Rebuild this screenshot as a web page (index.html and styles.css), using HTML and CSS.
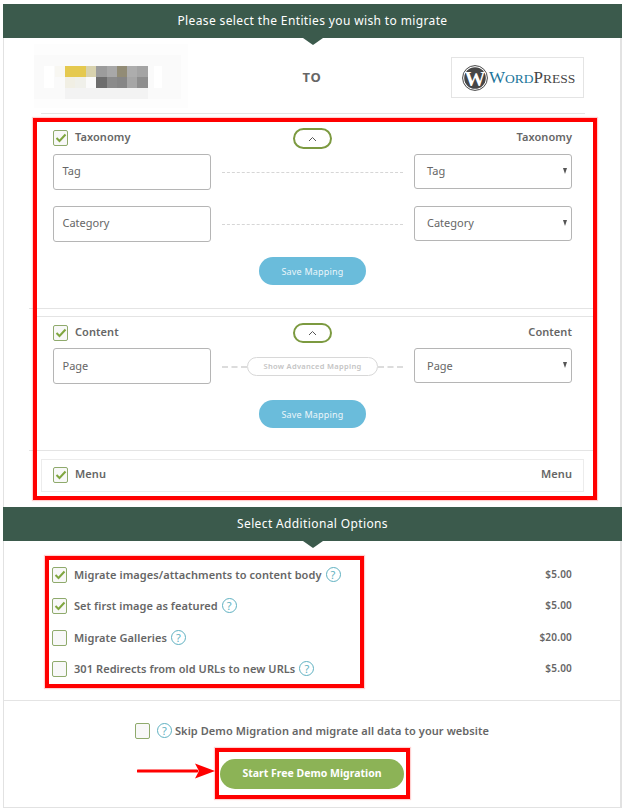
FILE: index.html
```html
<!DOCTYPE html>
<html lang="en">
<head>
<meta charset="utf-8">
<title>Migration</title>
<link rel="stylesheet" href="styles.css">
</head>
<body>
<main class="page">
  <h2 class="band">Please select the Entities you wish to migrate</h2>
  <div class="logos">
    <svg class="src-logo" width="154" height="64" viewBox="0 0 154 64" aria-hidden="true">
      <defs><filter id="b" x="-10%" y="-10%" width="120%" height="120%"><feGaussianBlur stdDeviation="0.7"/></filter></defs>
      <rect width="154" height="64" fill="#fdfdfd"/>
      <rect y="11" width="147" height="44" fill="#fafafa"/>
      <g filter="url(#b)">
        <rect x="10" y="22" width="10" height="22" fill="#fff"/>
        <rect x="21" y="22" width="10" height="11" fill="#f8f7f2"/>
        <rect x="31" y="22" width="21" height="11" fill="#e5c94f"/>
        <rect x="52" y="22" width="10" height="11" fill="#d8d2ae"/>
        <rect x="62" y="22" width="11" height="11" fill="#9c9c9c"/>
        <rect x="73" y="22" width="10" height="11" fill="#a8a8a8"/>
        <rect x="83" y="22" width="10" height="11" fill="#928c76"/>
        <rect x="93" y="22" width="10" height="11" fill="#adadad"/>
        <rect x="103" y="22" width="11" height="11" fill="#a4a4a4"/>
        <rect x="31" y="33" width="10" height="11" fill="#f1efe4"/>
        <rect x="41" y="33" width="11" height="11" fill="#f0f0ea"/>
        <rect x="62" y="33" width="11" height="11" fill="#6d6d6d"/>
        <rect x="73" y="33" width="10" height="11" fill="#8b8b8b"/>
        <rect x="83" y="33" width="10" height="11" fill="#868686"/>
        <rect x="93" y="33" width="10" height="11" fill="#a6a6a6"/>
        <rect x="103" y="33" width="11" height="11" fill="#8e8e8e"/>
        <rect x="31" y="44" width="83" height="11" fill="#f3f3f3"/>
        <rect x="120" y="22" width="8" height="22" fill="#fff"/>
      </g>
    </svg>
    <span class="to">TO</span>
    <div class="wp-box">
      <svg class="wp-mark" width="26" height="26" viewBox="0 0 26 26" aria-hidden="true">
        <circle cx="13" cy="13" r="12.4" fill="#fff" stroke="#464646" stroke-width="1"/>
        <circle cx="13" cy="13" r="10.8" fill="#464646"/>
        <text class="wp-w" x="13" y="20.5" text-anchor="middle">W</text>
      </svg>
      <span class="wp-word"><span class="wp-blue"><b>W</b><i>ORD</i></span><b>P</b><i>RESS</i></span>
    </div>
  </div>
  <hr class="rule rule-logos">

  <div class="red red-map">
    <section class="entity entity-tax">
      <div class="head">
        <label class="check-label"><span class="box on"><svg viewBox="0 0 12 10" width="12" height="10"><path d="M1.5 5 L4.5 8 L10.5 1.5" fill="none" stroke="#7fa63f" stroke-width="2"/></svg></span>Taxonomy</label>
        <span class="toggle"><svg viewBox="0 0 9 6" width="9" height="6"><path d="M1 5 L4.5 1.5 L8 5" fill="none" stroke="#555" stroke-width="1"/></svg></span>
        <span class="head-right">Taxonomy</span>
      </div>
      <div class="map-row">
        <div class="field">Tag</div>
        <span class="dash"></span>
        <div class="field select">Tag</div>
      </div>
      <div class="map-row map-row-next">
        <div class="field">Category</div>
        <span class="dash"></span>
        <div class="field select">Category</div>
      </div>
      <button class="save">Save Mapping</button>
    </section>
    <hr class="rule rule-bleed">
    <section class="entity entity-content">
      <div class="head">
        <label class="check-label"><span class="box on"><svg viewBox="0 0 12 10" width="12" height="10"><path d="M1.5 5 L4.5 8 L10.5 1.5" fill="none" stroke="#7fa63f" stroke-width="2"/></svg></span>Content</label>
        <span class="toggle"><svg viewBox="0 0 9 6" width="9" height="6"><path d="M1 5 L4.5 1.5 L8 5" fill="none" stroke="#555" stroke-width="1"/></svg></span>
        <span class="head-right">Content</span>
      </div>
      <div class="map-row">
        <div class="field">Page</div>
        <div class="adv"><span class="adv-dash"></span><span class="adv-pill">Show Advanced Mapping</span><span class="adv-dash"></span></div>
        <div class="field select">Page</div>
      </div>
      <button class="save">Save Mapping</button>
    </section>
    <hr class="rule rule-bleed">
    <section class="menu-row">
      <label class="check-label"><span class="box on"><svg viewBox="0 0 12 10" width="12" height="10"><path d="M1.5 5 L4.5 8 L10.5 1.5" fill="none" stroke="#7fa63f" stroke-width="2"/></svg></span>Menu</label>
      <span class="head-right">Menu</span>
    </section>
  </div>

  <h2 class="band band-options">Select Additional Options</h2>

  <div class="options">
    <div class="red red-opts">
      <label class="check-label opt"><span class="box on"><svg viewBox="0 0 12 10" width="12" height="10"><path d="M1.5 5 L4.5 8 L10.5 1.5" fill="none" stroke="#7fa63f" stroke-width="2"/></svg></span>Migrate images/attachments to content body<span class="help">?</span></label>
      <label class="check-label opt"><span class="box on"><svg viewBox="0 0 12 10" width="12" height="10"><path d="M1.5 5 L4.5 8 L10.5 1.5" fill="none" stroke="#7fa63f" stroke-width="2"/></svg></span>Set first image as featured<span class="help">?</span></label>
      <label class="check-label opt"><span class="box"></span>Migrate Galleries<span class="help">?</span></label>
      <label class="check-label opt"><span class="box"></span>301 Redirects from old URLs to new URLs<span class="help">?</span></label>
    </div>
    <div class="prices">
      <span>$5.00</span>
      <span>$5.00</span>
      <span>$20.00</span>
      <span>$5.00</span>
    </div>
  </div>
  <hr class="rule rule-foot">

  <label class="check-label skip"><span class="box"></span><span class="help help-skip">?</span>Skip Demo Migration and migrate all data to your website</label>

  <div class="cta">
    <svg class="arrow" width="78" height="16" viewBox="0 0 78 16" aria-hidden="true">
      <path d="M1 8 H60" stroke="#f00" stroke-width="3" stroke-linecap="round"/>
      <path d="M58 0.5 L78 8 L58 15.5 L62 8 Z" fill="#f00"/>
    </svg>
    <div class="red red-cta"><button class="start">Start Free Demo Migration</button></div>
  </div>
</main>
</body>
</html>
```
FILE: styles.css
```css
* { box-sizing: border-box; }
html, body { margin: 0; padding: 0; }
html { background: #fff; }
body { font-family: "Noto Sans", "Open Sans", sans-serif; color: #666; }
.page {
  position: relative;
  width: 619px;
  height: 804px;
  margin: 4px 0 0 3px;
  border-left: 1px solid #e2e2e2;
  border-right: 2px solid #e2e2e2;
  border-bottom: 1px solid #e2e2e2;
}
.band {
  position: relative;
  margin: 0 -2px 0 -1px;
  height: 34px;
  background: #3b5a4c;
  color: #fff;
  font-size: 12px;
  font-weight: 400;
  letter-spacing: 0.37px;
  line-height: 34px;
  text-align: center;
}
.band::after {
  content: "";
  position: absolute;
  left: 50%;
  top: 100%;
  margin-left: -10px;
  border-left: 10px solid transparent;
  border-right: 10px solid transparent;
  border-top: 7px solid #3b5a4c;
}
.logos {
  height: 75px;
  display: flex;
  align-items: center;
  justify-content: space-between;
  padding: 0 36px 0 30px;
}
.src-logo { display: block; }
.to { font-size: 13px; font-weight: 700; letter-spacing: 0.8px; color: #666; margin: 2px 0 0 -15px; }
.wp-box {
  width: 133px;
  height: 41px;
  margin-top: 4px;
  border: 1px solid #e4e4e4;
  display: flex;
  align-items: center;
  padding-left: 10px;
  gap: 1px;
}
.wp-mark { display: block; flex: none; }
.wp-w { font-family: "Liberation Serif", serif; font-size: 21px; font-weight: 700; fill: #fff; }
.wp-word { font-family: "Liberation Serif", serif; color: #464646; font-size: 15px; line-height: 1; white-space: nowrap; }
.wp-word b { font-weight: 400; font-size: 17px; }
.wp-word i { font-style: normal; font-size: 13.5px; }
.wp-blue { color: #21759b; }
.rule { border: 0; height: 1px; background: #e4e4e4; margin: 0; }
.rule-logos { margin: 0 35px 0 37px; }
.red { border: 4px solid #f00; box-shadow: 0 0 1px 1px rgba(255, 0, 0, 0.18); }
.red-map { width: 564px; height: 382px; margin: 4px 0 0 29px; }
.entity { padding: 6px 21px 0 16px; }
.entity-tax { height: 186px; }
.entity-tax .field { line-height: 32px; }
.entity-content { height: 134px; padding-top: 6px; border-top: 1px solid #e4e4e4; margin-top: 7px; }
.entity-content .head { height: 20px; }
.entity-content .toggle { height: 20px; }
.entity-content .box { margin-top: 1px; }
.entity-content .check-label, .entity-content .head-right { line-height: 17px; }
.entity-content .save { margin-top: 16px; }
.rule-bleed { margin: 0 0 0 -8px; width: calc(100% + 8px); position: relative; z-index: -1; }
.head { position: relative; height: 21px; display: flex; align-items: flex-start; justify-content: space-between; }
.check-label { display: flex; align-items: flex-start; font-size: 11px; font-weight: 600; letter-spacing: 0.07px; line-height: 18px; color: #666; white-space: nowrap; }
.head .box { margin-top: 2px; }
.box {
  flex: none;
  width: 15px;
  height: 16px;
  margin-right: 7px;
  border: 1px solid #8faa6c;
  border-radius: 2px;
  background: #f8f8f8;
  display: flex;
  align-items: center;
  justify-content: center;
}
.toggle {
  position: absolute;
  left: 240px;
  top: 0;
  width: 39px;
  height: 21px;
  border: 2px solid #7c9a40;
  border-radius: 11px;
  display: flex;
  align-items: center;
  justify-content: center;
}
.head-right { font-size: 11px; font-weight: 600; letter-spacing: 0.07px; line-height: 18px; color: #666; }
.map-row { display: flex; align-items: flex-start; justify-content: space-between; margin-top: 5px; height: 36px; }
.map-row-next { margin-top: 16px; }
.field {
  position: relative;
  width: 158px;
  height: 36px;
  padding-left: 8.5px;
  border: 1px solid #b5b5b5;
  border-radius: 3px;
  background: #fff;
  font-size: 11px;
  line-height: 33px;
  color: #666;
}
.select { height: 35px; padding-left: 12px; }
.select::after {
  content: "";
  position: absolute;
  right: 4px;
  top: 13px;
  border-left: 2.5px solid transparent;
  border-right: 2.5px solid transparent;
  border-top: 6px solid #555;
}
.dash { width: 181px; margin-top: 18px; border-top: 1px dashed #d6d6d6; }
.adv { width: 181px; height: 19px; margin-top: 9px; display: flex; align-items: center; }
.adv-dash { flex: 1; border-top: 2px dashed #dcdcdc; }
.adv-pill {
  flex: none;
  width: 131px;
  height: 19px;
  border: 1px solid #d8d8d8;
  border-radius: 10px;
  font-size: 7.5px;
  font-weight: 600;
  letter-spacing: 0.3px;
  line-height: 16px;
  text-align: center;
  color: #c4c4c4;
}
.save {
  display: block;
  width: 107px;
  height: 28px;
  margin: 15px auto 0;
  padding: 0;
  border: 0;
  border-radius: 14px;
  background: #6abcdb;
  color: #eaf6fa;
  font-family: inherit;
  font-size: 9px;
  letter-spacing: 0.2px;
}
.entity-content .map-row { margin-top: 5px; }
.menu-row {
  display: flex;
  align-items: flex-start;
  justify-content: space-between;
  height: 33px;
  margin: 8px 9px 0 4px;
  padding: 6px 11px 0 11px;
  border: 1px solid #ececec;
}
.menu-row .box { margin-top: 1px; }
.menu-row .check-label, .menu-row .head-right { line-height: 16px; }
.band-options { margin-top: 7px; }
.options { height: 159px; padding-top: 15px; display: flex; }
.red-opts {
  width: 319px;
  height: 132px;
  margin-left: 41px;
  padding: 7px 0 0 3px;
  display: flex;
  flex-direction: column;
  gap: 15.4px;
}
.opt { height: 16px; line-height: 15px; }
.help {
  flex: none;
  width: 15px;
  height: 15px;
  margin-left: 4px;
  border: 1px solid #5fb1c1;
  border-radius: 50%;
  color: #5fb1c1;
  font-size: 11px;
  font-weight: 400;
  line-height: 13px;
  text-align: center;
}
.prices {
  width: 208px;
  padding-top: 9px;
  display: flex;
  flex-direction: column;
  align-items: flex-end;
  gap: 13.4px;
  font-size: 10px;
  font-weight: 600;
  letter-spacing: 0.2px;
  line-height: 18px;
  color: #666;
}
.rule-foot { margin: 0; }
.skip { margin: 22px 0 0 131px; height: 16px; line-height: 15px; }
.help-skip { margin: 0 3px 0 0; }
.cta { position: relative; display: flex; justify-content: flex-start; margin: 9px 0 0 211px; }
.arrow { position: absolute; left: -78px; top: 15px; }
.red-cta { width: 195px; height: 51px; padding: 7px 0 0 1px; }
.start {
  display: block;
  width: 184px;
  height: 30px;
  padding: 0 0 2px;
  border: 0;
  border-radius: 15px;
  background: #8cb356;
  color: #fff;
  font-family: inherit;
  font-size: 10.5px;
  font-weight: 700;
}
```
